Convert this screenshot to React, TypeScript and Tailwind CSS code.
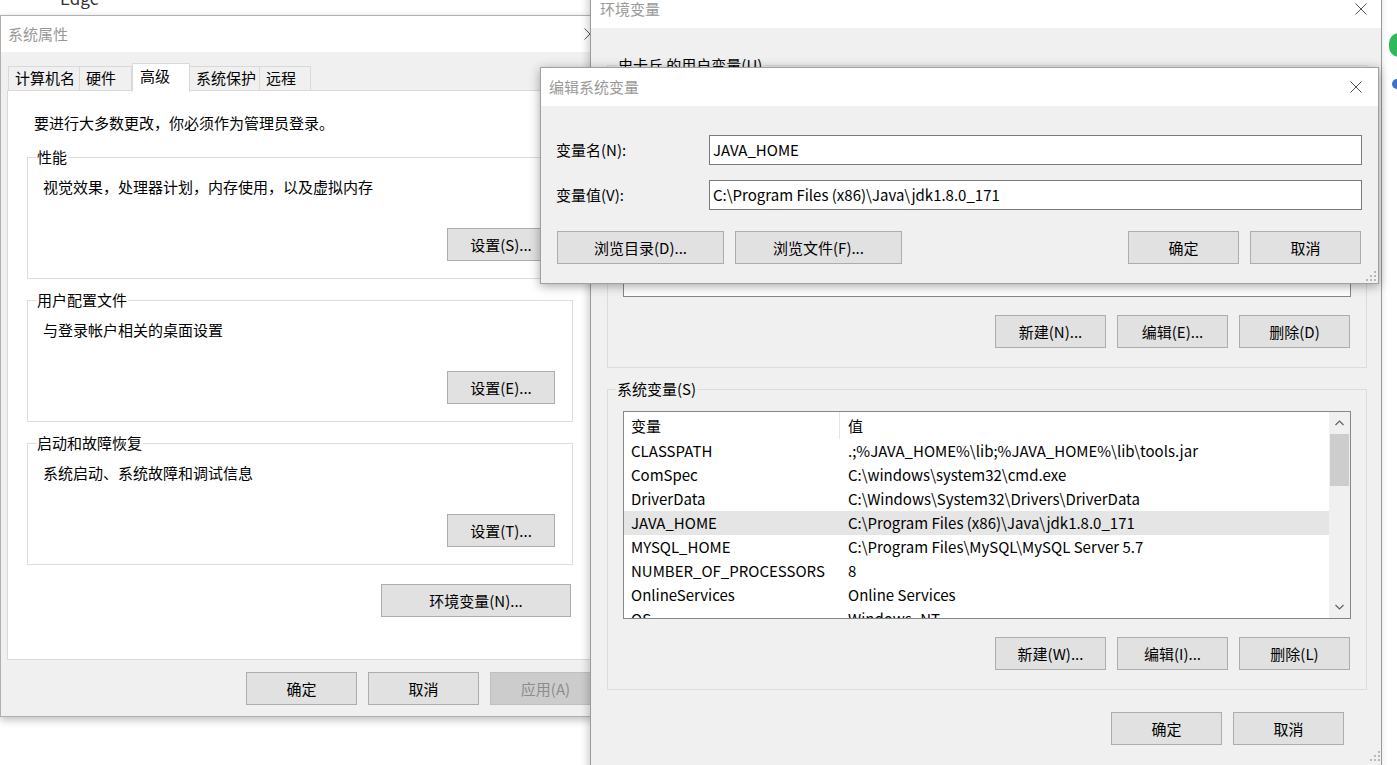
import React from "react";

type BtnProps = { label: string; className?: string; disabled?: boolean };

function Btn({ label, className = "", disabled }: BtnProps) {
  const tone = disabled
    ? "bg-[#cccccc] border-[#bfbfbf] text-[#8c8c8c]"
    : "bg-[#e1e1e1] border-[#adadad] text-black";
  return (
    <div className={`flex h-[33px] shrink-0 items-center justify-center border ${tone} ${className}`}>
      {label}
    </div>
  );
}

function CloseX({ className = "" }: { className?: string }) {
  return (
    <svg width="12" height="12" viewBox="0 0 12 12" className={className}>
      <path d="M0.5 0.5 L11.5 11.5 M11.5 0.5 L0.5 11.5" stroke="#555" strokeWidth="1" fill="none" />
    </svg>
  );
}

function Grip({ className = "" }: { className?: string }) {
  const dots = [
    [8, 0],
    [8, 4],
    [4, 4],
    [8, 8],
    [4, 8],
    [0, 8],
  ];
  return (
    <svg width="10" height="10" viewBox="0 0 10 10" className={className}>
      {dots.map(([x, y], i) => (
        <rect key={i} x={x} y={y} width="2" height="2" fill="#b8b8b8" />
      ))}
    </svg>
  );
}

function Group({ title, text, button }: { title: string; text: string; button: string }) {
  return (
    <fieldset className="w-[546px] border border-[#dcdcdc]">
      <legend className="ml-[8px] px-[1px]">{title}</legend>
      <div className="flex flex-col pl-[15px] pr-[17px] pt-[10px] pb-[17px]">
        <div>{text}</div>
        <div className="mt-[31px] flex justify-end">
          <Btn label={button} className="w-[108px]" />
        </div>
      </div>
    </fieldset>
  );
}

function SystemProps() {
  const tabs = [
    { t: "计算机名", w: "w-[72px]" },
    { t: "硬件", w: "w-[53px]" },
    { t: "高级", w: "w-[58px]", on: true },
    { t: "系统保护", w: "w-[71px]" },
    { t: "远程", w: "w-[52px]" },
  ];
  return (
    <div className="absolute left-0 top-[15px] flex h-[702px] w-[593px] flex-col overflow-hidden border border-[#b0b0b0] bg-[#f0f0f0] shadow-[0_3px_8px_rgba(0,0,0,0.25)]">
      <div className="flex h-[36px] shrink-0 items-center justify-between bg-white pl-[7px] pr-[0px] text-[#999]">
        <span>系统属性</span>
        <CloseX className="-mr-[4px]" />
      </div>
      <div className="flex flex-col pl-[6px]">
        <div className="mt-[11px] flex h-[28px] items-end pl-[1px]">
          {tabs.map((tab) =>
            tab.on ? (
              <div
                key={tab.t}
                className={`relative z-10 -mb-[1px] h-[29px] ${tab.w} border border-b-0 border-[#d9d9d9] bg-white pl-[7px] pt-[2px]`}
              >
                {tab.t}
              </div>
            ) : (
              <div
                key={tab.t}
                className={`h-[25px] ${tab.w} -ml-[1px] border border-b-0 border-[#d9d9d9] bg-[#f0f0f0] pl-[6px] pt-[1px] first:ml-0`}
              >
                {tab.t}
              </div>
            )
          )}
        </div>
        <div className="-mt-[1px] flex h-[570px] w-[600px] flex-col border border-[#d9d9d9] bg-white pl-[19px] pt-[22px]">
          <div className="pl-[7px]">要进行大多数更改，你必须作为管理员登录。</div>
          <div className="mt-[14px] flex flex-col gap-[11px]">
            <Group title="性能" text="视觉效果，处理器计划，内存使用，以及虚拟内存" button="设置(S)..." />
            <Group title="用户配置文件" text="与登录帐户相关的桌面设置" button="设置(E)..." />
            <Group title="启动和故障恢复" text="系统启动、系统故障和调试信息" button="设置(T)..." />
          </div>
          <div className="mt-[19px] flex w-[544px] justify-end">
            <Btn label="环境变量(N)..." className="w-[190px]" />
          </div>
        </div>
        <div className="mt-[12px] flex gap-[11px] pl-[239px]">
          <Btn label="确定" className="w-[111px]" />
          <Btn label="取消" className="w-[111px]" />
          <Btn label="应用(A)" className="w-[111px]" disabled />
        </div>
      </div>
    </div>
  );
}

const sysVars: [string, string][] = [
  ["CLASSPATH", ".;%JAVA_HOME%\\lib;%JAVA_HOME%\\lib\\tools.jar"],
  ["ComSpec", "C:\\windows\\system32\\cmd.exe"],
  ["DriverData", "C:\\Windows\\System32\\Drivers\\DriverData"],
  ["JAVA_HOME", "C:\\Program Files (x86)\\Java\\jdk1.8.0_171"],
  ["MYSQL_HOME", "C:\\Program Files\\MySQL\\MySQL Server 5.7"],
  ["NUMBER_OF_PROCESSORS", "8"],
  ["OnlineServices", "Online Services"],
  ["OS", "Windows_NT"],
];

function VarList() {
  return (
    <div className="flex h-[208px] border border-[#828790] bg-white">
      <div className="flex-1 overflow-hidden">
        <div className="flex h-[27px] items-center">
          <div className="h-full w-[216px] border-r border-[#e5e5e5] pl-[7px] pt-[4px]">变量</div>
          <div className="pl-[8px]">值</div>
        </div>
        {sysVars.map(([k, v]) => (
          <div
            key={k}
            className={`flex h-[24px] items-center ${k === "JAVA_HOME" ? "bg-[#e5e5e5]" : ""}`}
          >
            <div className="w-[217px] shrink-0 pl-[7px]">{k}</div>
            <div className="whitespace-nowrap pl-[7px]">{v}</div>
          </div>
        ))}
      </div>
      <div className="flex w-[21px] flex-col items-center bg-[#f0f0f0]">
        <svg width="9" height="6" viewBox="0 0 9 6" className="mt-[8px]">
          <path d="M0.5 5 L4.5 1 L8.5 5" stroke="#606060" strokeWidth="1.2" fill="none" />
        </svg>
        <div className="mt-[8px] h-[52px] w-[19px] bg-[#cdcdcd]" />
        <div className="flex-1" />
        <svg width="9" height="6" viewBox="0 0 9 6" className="mb-[8px]">
          <path d="M0.5 1 L4.5 5 L8.5 1" stroke="#606060" strokeWidth="1.2" fill="none" />
        </svg>
      </div>
    </div>
  );
}

function EnvVars() {
  return (
    <div className="absolute left-[590px] top-[-11px] flex h-[800px] w-[792px] flex-col border border-[#9a9a9a] bg-[#f0f0f0] shadow-[-2px_0_8px_rgba(0,0,0,0.2)]">
      <div className="flex h-[38px] shrink-0 items-center justify-between bg-white pl-[9px] pr-[14px] text-[#999]">
        <span>环境变量</span>
        <CloseX />
      </div>
      <div className="flex flex-col pl-[16px] pt-[27px]">
        <fieldset className="w-[760px] border border-[#dcdcdc]">
          <legend className="ml-[9px] px-[1px]">史卡丘 的用户变量(U)</legend>
          <div className="flex flex-col px-[15px] pb-[19px] pt-[10px]">
            <div className="h-[212px] border border-[#828790] bg-white" />
            <div className="mt-[18px] flex justify-end gap-[11px] pr-[1px]">
              <Btn label="新建(N)..." className="w-[111px]" />
              <Btn label="编辑(E)..." className="w-[111px]" />
              <Btn label="删除(D)" className="w-[111px]" />
            </div>
          </div>
        </fieldset>
        <fieldset className="mt-[11px] w-[760px] border border-[#dcdcdc]">
          <legend className="ml-[8px] px-[1px]">系统变量(S)</legend>
          <div className="flex flex-col px-[15px] pb-[19px] pt-[12px]">
            <VarList />
            <div className="mt-[18px] flex justify-end gap-[11px] pr-[1px]">
              <Btn label="新建(W)..." className="w-[111px]" />
              <Btn label="编辑(I)..." className="w-[111px]" />
              <Btn label="删除(L)" className="w-[111px]" />
            </div>
          </div>
        </fieldset>
        <div className="mt-[22px] flex w-[774px] items-end justify-end gap-[11px] pr-[37px]">
          <Btn label="确定" className="w-[111px]" />
          <Btn label="取消" className="w-[111px]" />
        </div>
        <div className="mt-[6px] flex w-[773px] justify-end">
          <Grip />
        </div>
      </div>
    </div>
  );
}

function EditVar() {
  return (
    <div className="absolute left-[540px] top-[67px] flex h-[217px] w-[839px] flex-col border border-[#a0a0a0] bg-[#f0f0f0] shadow-[0_2px_10px_rgba(0,0,0,0.35)]">
      <div className="flex h-[38px] shrink-0 items-center justify-between bg-white pl-[8px] pr-[16px] text-[#999]">
        <span>编辑系统变量</span>
        <CloseX />
      </div>
      <div className="flex flex-col pl-[15px] pr-[16px] pt-[29px]">
        <div className="flex h-[30px] items-center">
          <div className="w-[153px] shrink-0">变量名(N):</div>
          <div className="flex h-[30px] flex-1 items-center border border-[#7a7a7a] bg-white pl-[3px]">JAVA_HOME</div>
        </div>
        <div className="mt-[15px] flex h-[30px] items-center">
          <div className="w-[153px] shrink-0">变量值(V):</div>
          <div className="flex h-[30px] flex-1 items-center border border-[#7a7a7a] bg-white pl-[3px]">
            C:\Program Files (x86)\Java\jdk1.8.0_171
          </div>
        </div>
        <div className="mt-[21px] flex items-center gap-[11px] pl-[1px] pr-[1px]">
          <Btn label="浏览目录(D)..." className="w-[167px]" />
          <Btn label="浏览文件(F)..." className="w-[167px]" />
          <div className="flex-1" />
          <Btn label="确定" className="w-[111px]" />
          <Btn label="取消" className="w-[111px]" />
        </div>
      </div>
      <div className="mt-auto flex justify-end pb-[2px] pr-[2px]">
        <Grip />
      </div>
    </div>
  );
}

export default function App() {
  return (
    <div className="relative h-[765px] w-[1397px] overflow-hidden bg-white font-['Noto_Sans_CJK_SC',sans-serif] text-[15px] leading-[20px] text-black">
      <div className="absolute left-[60px] top-[-12px] text-[17px] text-[#333] [text-shadow:0_0_3px_#fff]">Edge</div>
      <div className="absolute left-[1389px] top-[33px] h-[24px] w-[20px] rounded-full bg-[#2fb95a]" />
      <div className="absolute left-[1392px] top-[79px] h-[10px] w-[10px] rounded-full bg-[#3f6fcf]" />
      <SystemProps />
      <EnvVars />
      <EditVar />
    </div>
  );
}
